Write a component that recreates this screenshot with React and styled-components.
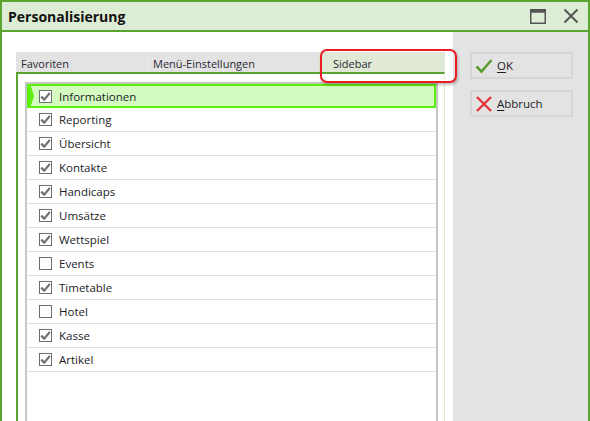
import React from "react";
import styled, { createGlobalStyle } from "styled-components";

const GlobalStyle = createGlobalStyle`
  html, body {
    margin: 0;
    padding: 0;
    background: #ffffff;
  }
  body {
    font-family: "Open Sans", "Noto Sans", sans-serif;
    font-size: 11px;
    color: #1c1c28;
  }
`;

const Window = styled.div`
  position: relative;
  width: 590px;
  height: 421px;
  box-sizing: border-box;
  border: 2px solid #5aa532;
  border-bottom: none;
  display: flex;
  flex-direction: column;
  overflow: hidden;
`;

const TitleBar = styled.div`
  height: 28px;
  background: #ddecd4;
  border-bottom: 2px solid #5aa532;
  display: flex;
  align-items: center;
  padding: 0 1px 0 6px;
`;

const Title = styled.div`
  flex: 1;
  font-size: 14px;
  font-weight: 700;
  color: #111;
`;

const TitleButton = styled.div`
  width: 33px;
  height: 20px;
  display: flex;
  align-items: center;
  justify-content: center;
`;

const Body = styled.div`
  flex: 1;
  display: flex;
`;

const Main = styled.div`
  width: 451px;
  background: #fff;
  padding: 20px 0 0 14px;
  box-sizing: border-box;
  display: flex;
  flex-direction: column;
`;

const TabStrip = styled.div`
  display: flex;
  width: 429px;
  height: 20px;
  background: #e3e3e3;
`;

const Tab = styled.div`
  width: ${p => p.w}px;
  box-sizing: border-box;
  padding: 4px 0 0 ${p => p.pad}px;
  color: #2a2a34;
  background: ${p => (p.active ? "#dfe9d6" : "transparent")};
  border-left: ${p => (p.divider ? "1px solid #e9e9e9" : "none")};
`;

const Panel = styled.div`
  flex: 1;
  width: 429px;
  box-sizing: border-box;
  border-top: 2px solid #5aa532;
  border-left: 2px solid #5aa532;
  border-right: 1px solid #dcedd0;
  padding: 8px 6px 0 7px;
  display: flex;
`;

const List = styled.div`
  flex: 1;
  border: 2px solid #c6c6c6;
  border-bottom: none;
  background: #fff;
`;

const Row = styled.div`
  position: relative;
  height: 24px;
  box-sizing: border-box;
  display: flex;
  align-items: center;
  padding-left: ${p => (p.selected ? 10 : 12)}px;
  gap: 7px;
  background: ${p => (p.selected ? "#d4fcc0" : "#fff")};
  border: ${p => (p.selected ? "2px solid #5ef00a" : "none")};
  border-bottom: ${p => (p.selected ? "2px solid #5ef00a" : "1px solid #e2e2e2")};
  font-size: 11.5px;
`;

const Marker = styled.div`
  position: absolute;
  left: -2px;
  top: -2px;
  width: 7px;
  height: 24px;
  background: #5ef00a;
  clip-path: polygon(0 0, 45% 0, 100% 50%, 45% 100%, 0 100%);
`;

const Box = styled.div`
  width: 13px;
  height: 13px;
  box-sizing: border-box;
  border: 1px solid #6e6e6e;
  background: #fff;
  display: flex;
  align-items: center;
  justify-content: center;
`;

const Side = styled.div`
  flex: 1;
  background: #e3e3e3;
  padding: 20px 0 0 17px;
  display: flex;
  flex-direction: column;
  gap: 11px;
`;

const Button = styled.div`
  width: 103px;
  height: 27px;
  box-sizing: border-box;
  border: 2px solid #d5d5d5;
  display: flex;
  align-items: center;
  gap: 4px;
  padding-left: 3px;
  font-size: 11.5px;
  color: #1c1c28;
  u {
    text-decoration-thickness: 1px;
    text-underline-offset: 2px;
  }
`;

const Highlight = styled.div`
  position: absolute;
  left: 318px;
  top: 47px;
  width: 137px;
  height: 34px;
  box-sizing: border-box;
  border: 2px solid #ea1b24;
  border-radius: 7px;
  box-shadow: 1px 2px 3px rgba(0, 0, 0, 0.25);
`;

const Check = () => (
  <svg width="11" height="11" viewBox="0 0 11 11">
    <path d="M1.2 5.6 L4.2 8.6 L9.8 2" fill="none" stroke="#727272" strokeWidth="2.2" />
  </svg>
);

const items = [
  ["Informationen", true],
  ["Reporting", true],
  ["Übersicht", true],
  ["Kontakte", true],
  ["Handicaps", true],
  ["Umsätze", true],
  ["Wettspiel", true],
  ["Events", false],
  ["Timetable", true],
  ["Hotel", false],
  ["Kasse", true],
  ["Artikel", true],
];

export default function App() {
  return (
    <>
      <GlobalStyle />
      <Window>
        <TitleBar>
          <Title>Personalisierung</Title>
          <TitleButton>
            <svg width="16" height="15" viewBox="0 0 16 15">
              <rect x="0.75" y="0.75" width="14.5" height="13.5" fill="none" stroke="#555" strokeWidth="1.5" />
              <rect x="0.75" y="0.75" width="14.5" height="3" fill="#555" />
            </svg>
          </TitleButton>
          <TitleButton>
            <svg width="16" height="16" viewBox="0 0 16 16">
              <path d="M1.5 1.5 L14.5 14.5 M14.5 1.5 L1.5 14.5" stroke="#555" strokeWidth="2" />
            </svg>
          </TitleButton>
        </TitleBar>
        <Body>
          <Main>
            <TabStrip>
              <Tab w={132} pad={5}>Favoriten</Tab>
              <Tab w={170} pad={4} divider>Menü-Einstellungen</Tab>
              <Tab w={127} pad={15} active>Sidebar</Tab>
            </TabStrip>
            <Panel>
              <List>
                {items.map(([name, on], i) => (
                  <Row key={name} selected={i === 0}>
                    {i === 0 && <Marker />}
                    <Box>{on && <Check />}</Box>
                    {name}
                  </Row>
                ))}
              </List>
            </Panel>
          </Main>
          <Side>
            <Button>
              <svg width="18" height="16" viewBox="0 0 18 16">
                <path d="M1.5 8.5 L6.5 13.5 L16.5 2" fill="none" stroke="#5a9e32" strokeWidth="2.6" />
              </svg>
              <span><u>O</u>K</span>
            </Button>
            <Button>
              <svg width="18" height="16" viewBox="0 0 18 16">
                <path d="M2 1 L16 15 M16 1 L2 15" stroke="#e0343a" strokeWidth="2.4" />
              </svg>
              <span><u>A</u>bbruch</span>
            </Button>
          </Side>
        </Body>
        <Highlight />
      </Window>
    </>
  );
}
